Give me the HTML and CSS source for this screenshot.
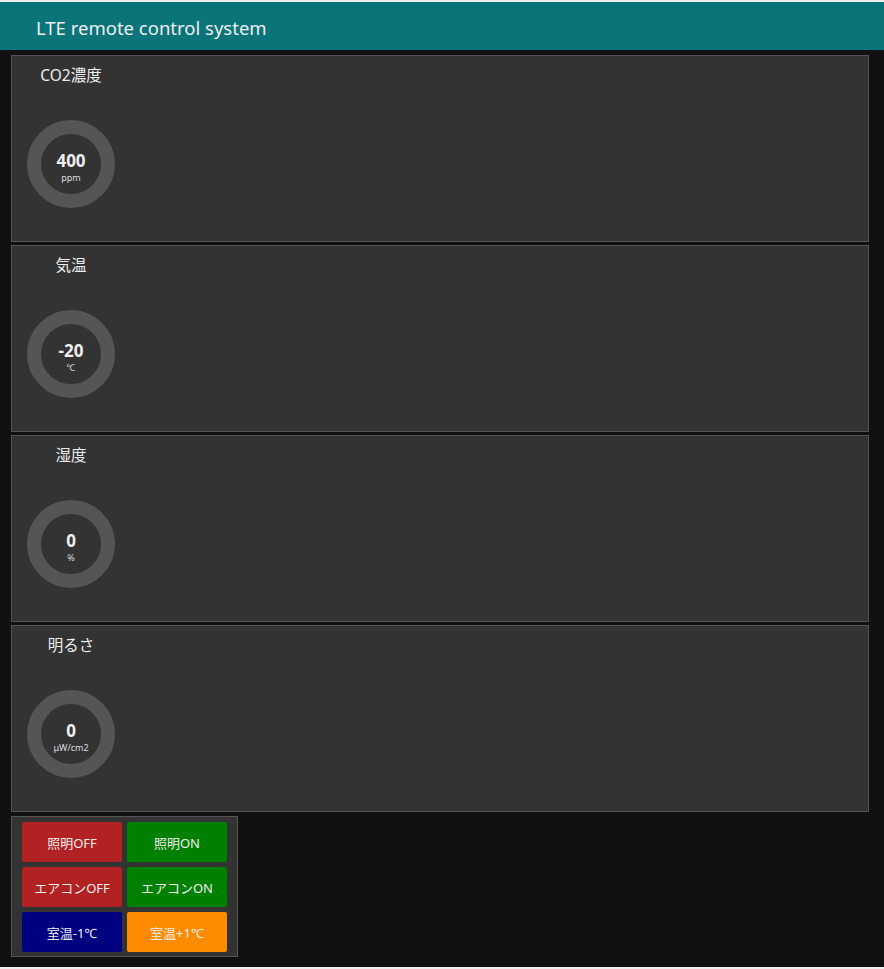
FILE: index.html
```html
<!DOCTYPE html>
<html lang="ja">
<head>
<meta charset="utf-8">
<title>LTE remote control system</title>
<link rel="stylesheet" href="styles.css">
</head>
<body>
<div class="topline"></div>
<header class="toolbar"><h1 class="title">LTE remote control system</h1></header>
<main class="content">
  <section class="panel">
    <div class="widget">
      <div class="label">CO2濃度</div>
      <div class="gauge"><span class="value">400</span><span class="unit">ppm</span></div>
    </div>
  </section>
  <section class="panel">
    <div class="widget">
      <div class="label">気温</div>
      <div class="gauge"><span class="value">-20</span><span class="unit">℃</span></div>
    </div>
  </section>
  <section class="panel">
    <div class="widget">
      <div class="label">湿度</div>
      <div class="gauge"><span class="value">0</span><span class="unit">%</span></div>
    </div>
  </section>
  <section class="panel">
    <div class="widget">
      <div class="label">明るさ</div>
      <div class="gauge"><span class="value">0</span><span class="unit">μW/cm2</span></div>
    </div>
  </section>
  <section class="buttons">
    <button class="btn red">照明OFF</button>
    <button class="btn green">照明ON</button>
    <button class="btn red">エアコンOFF</button>
    <button class="btn green">エアコンON</button>
    <button class="btn navy">室温-1℃</button>
    <button class="btn orange">室温+1℃</button>
  </section>
</main>
<div class="bottomline"></div>
</body>
</html>
```

FILE: styles.css
```css
html, body {
  margin: 0;
  padding: 0;
  height: 100%;
}
body {
  background: #111111;
  font-family: "Noto Sans", "Noto Sans CJK JP", sans-serif;
  color: #eeeeee;
  display: flex;
  flex-direction: column;
}
.topline {
  height: 2px;
  background: #eeeeee;
  flex: none;
}
.toolbar {
  height: 48px;
  background: #0a7479;
  display: flex;
  align-items: center;
  padding-left: 36px;
  padding-top: 4px;
  box-sizing: border-box;
  flex: none;
}
.title {
  margin: 0;
  font-size: 18.5px;
  font-weight: 400;
  line-height: 24px;
  color: #eeeeee;
}
.content {
  flex: 1;
  padding: 5px 0 0 11px;
  display: flex;
  flex-direction: column;
  gap: 3px;
}
.panel {
  width: 856px;
  height: 185px;
  background: #333333;
  border: 1px solid #555555;
}
.widget {
  width: 118px;
  display: flex;
  flex-direction: column;
  align-items: center;
}
.label {
  margin-top: 9px;
  line-height: 20px;
  font-size: 15.5px;
  color: #eeeeee;
}
.gauge {
  margin-top: 35px;
  width: 60px;
  height: 60px;
  border: 14.5px solid #555555;
  border-radius: 50%;
  background: #333333;
  display: flex;
  flex-direction: column;
  align-items: center;
  justify-content: flex-start;
  padding-top: 0;
}
.value {
  margin-top: 18px;
  font-size: 17px;
  font-weight: 700;
  line-height: 18px;
}
.unit {
  margin-top: 2px;
  font-size: 9px;
  line-height: 11px;
  color: #dddddd;
}
.buttons {
  margin-top: 1px;
  width: 205px;
  padding: 5px 10px 4px 10px;
  background: #333333;
  border: 1px solid #555555;
  display: grid;
  grid-template-columns: 100px 100px;
  grid-auto-rows: 40px;
  gap: 5px;
}
.btn {
  border: none;
  border-radius: 2px;
  margin: 0;
  padding: 0;
  font-family: "Noto Sans", "Noto Sans CJK JP", sans-serif;
  font-size: 13px;
  color: #eeeeee;
  cursor: pointer;
}
.red { background: #b22222; }
.green { background: #008000; }
.navy { background: #000080; }
.orange { background: #ff8c00; }
.bottomline {
  height: 2px;
  background: #eeeeee;
  flex: none;
}
```
